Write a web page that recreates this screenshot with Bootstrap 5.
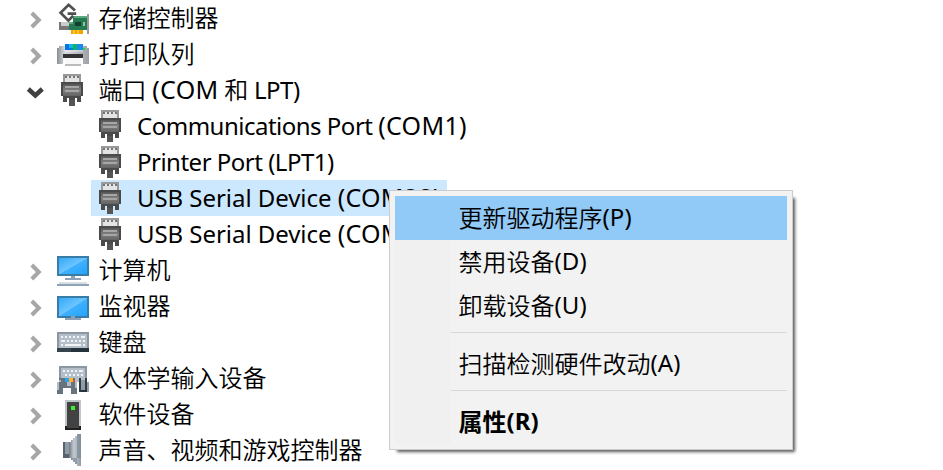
<!DOCTYPE html>
<html lang="zh-CN">
<head>
<meta charset="utf-8">
<title>设备管理器</title>
<link href="https://cdn.jsdelivr.net/npm/bootstrap@5.3.0/dist/css/bootstrap.min.css" rel="stylesheet">
<style>
body{width:943px;height:470px;background:#fff;color:#000;font:24px/36px "Noto Sans","Noto Sans CJK SC",sans-serif}
.zh{font-family:"Noto Sans CJK SC",sans-serif;font-weight:350}
.en{font-family:"Noto Sans",sans-serif;letter-spacing:-.5px}
.en-usb{letter-spacing:-.05px}
.com-word{font-size:25px;letter-spacing:.3px}
.tree-row{height:36px;padding-left:25px;line-height:34px}
.twisty{width:22px;height:36px;margin-right:10px;fill:none;stroke:#a6a6a6;stroke-width:4}
.twisty.open{stroke:#404040;stroke-width:4.5}
.dev-icon{width:32px;height:32px;margin:2px 9.5px 2px 0;shape-rendering:crispEdges}
.tree-child{padding-left:91px}
.child-label{height:36px;padding-left:4px;line-height:35px}
.child-label.selected{background:#cce8ff;width:356px}
.child-label .dev-icon{margin-right:10px}
.ctx{left:389px;top:190px;width:404px;height:260px;padding:5px;background:#f2f2f2;border:1px solid #ccc;box-shadow:5px 5px 3px -3px rgba(0,0,0,.65)}
.ctx-body{background:linear-gradient(90deg,#f0f0f0 56px,#f2f2f2 56px)}
.ctx-item{height:44px;padding:0 0 2px 63.5px}
.ctx-item .en{letter-spacing:.1px}
.ctx-item.hot{background:#91c9f7}
.ctx-line{height:1px;margin:4px 0 9px 56px;background:#d7d7d7}
</style>
<script src="https://cdn.jsdelivr.net/npm/bootstrap@5.3.0/dist/js/bootstrap.bundle.min.js"></script>
</head>
<body class="overflow-hidden position-relative">
<svg width="0" height="0" class="position-absolute">
<defs>
<linearGradient id="scr" x1="0" y1="0" x2="1" y2="1"><stop offset="0" stop-color="#35a8f8"/><stop offset=".5" stop-color="#6cc5ff"/><stop offset=".52" stop-color="#3fb0ff"/><stop offset="1" stop-color="#22a4fb"/></linearGradient>
<linearGradient id="plug" x1="0" y1="0" x2="0" y2="1"><stop offset="0" stop-color="#555"/><stop offset=".5" stop-color="#808080"/><stop offset="1" stop-color="#636363"/></linearGradient>
<linearGradient id="cone"><stop offset="0" stop-color="#707a84"/><stop offset=".4" stop-color="#c3c9cf"/><stop offset="1" stop-color="#8f9ba6"/></linearGradient>
<linearGradient id="prn"><stop offset="0" stop-color="#8a8d92"/><stop offset=".25" stop-color="#d8dade"/><stop offset="1" stop-color="#9da0a6"/></linearGradient>
</defs>
<symbol id="shut" viewBox="0 0 22 36"><path d="M6.8 13l7 7-7 7"/></symbol>
<symbol id="opened" viewBox="0 0 22 36"><path d="M3.3 17l7 6.5 7-6.5"/></symbol>
<symbol id="port" viewBox="0 0 16 16">
<path fill="#999" d="M3 0h9v4H3z"/><path fill="#e3e3e3" d="M4 1h7v3H4z"/><path fill="#777" d="M4 1h1v1H4zM6 1h1v1H6zM8 1h1v1H8zM10 1h1v1h-1z"/>
<path fill="#4a4a4a" d="M2 4h11v7H12v3h-2v-2H9v4H6v-4H5v2H3v-3H2z"/><path fill="url(#plug)" d="M3 5h9v6H3z"/><path fill="#a6a6a6" d="M4 6h7v1H4zM4 8h7v1H4z"/><path fill="#555" d="M6 13h3v3H6z"/>
</symbol>
<symbol id="storage" viewBox="0 0 16 16">
<path fill="#777" d="M1 10h5v4H1z"/><path fill="#ccc" d="M2 10h4v2H2z"/>
<path fill="#267a52" d="M8 7h7v7H6v-4h2z"/><path fill="#59a981" d="M8 7h7v1H8zM6 10h2v1H6z"/><path fill="#173d31" d="M9 10h3v2H9z"/><path fill="#8cc6a8" d="M13 10h1v2h-1z"/>
<path fill="#f5a400" d="M7 14h6v2H7z"/><path fill="#ffc52e" d="M8 14h1v2H8zM10 14h1v2h-1z"/><path fill="#999" d="M15 6h1v10h-1z"/>
<path fill="#fff" d="M5 3h2v1h1v1H5v3h1v1H5V8H4V7H3V4h2z"/>
<path shape-rendering="auto" fill="none" stroke="#505050" stroke-width="1.35" d="M9 4.3L5.8 1.4 1.8 5.4l3.9 3.9 2.4-2.4M9.6 5.8H5.3"/>
</symbol>
<symbol id="printer" viewBox="0 0 16 16">
<path fill="url(#prn)" d="M1 4h14v1h1v8h-3v-3H3v3H0V5h1z"/><path fill="#0078e0" d="M4 3h9v3H4z"/><path fill="#17b2ef" d="M6 3h2v2H6z"/><path fill="#09b85d" d="M8 3h2v3H8z"/><path fill="#1d87f5" d="M10 3h3v3h-3z"/><path fill="#fff" d="M4 6h9v1H4z" opacity=".35"/><path fill="#00ed28" d="M13 5h1v1h-1z"/>
<path fill="#333" d="M3 8h10v2H3z"/><path fill="#f8f8f8" d="M4 10h8v4H4z"/><path fill="#bbb" d="M4 13h8v1H4z"/>
</symbol>
<symbol id="pc" viewBox="0 0 16 16">
<path fill="#397ca6" d="M0 1h16v10H0z"/><path fill="url(#scr)" d="M1 2h14v8H1z"/><path fill="#8da2b6" d="M7 11h2v1H7zM4 12h8v1H4z"/><path fill="#d9dee3" d="M1 14h14v1H1z"/><path fill="#8da2b6" d="M0 15h16v1H0z"/>
</symbol>
<symbol id="screen" viewBox="0 0 16 16">
<path fill="#397ca6" d="M0 3h16v11H0z"/><path fill="url(#scr)" d="M1 4h14v9H1z"/><path fill="#8da2b6" d="M7 13h2v1H7zM4 14h8v1H4z"/>
</symbol>
<symbol id="keys" viewBox="0 0 16 16">
<path fill="#8c97a1" d="M0 3h16v8H0z"/><path fill="#b5bfc9" d="M1 4h14v7H1z"/><path fill="#f1f4f6" d="M2 5h1v1H2zM4 5h1v1H4zM6 5h1v1H6zM8 5h1v1H8zM10 5h1v1h-1zM12 5h2v1h-2zM2 7h2v1H2zM5 7h1v1H5zM7 7h1v1H7zM9 7h1v1H9zM11 7h1v1h-1zM13 7h1v1h-1zM2 9h1v1H2zM4 9h8v1H4zM13 9h1v1h-1z"/><path fill="#35434d" d="M0 11h16v2H0z"/><path fill="#26323b" d="M7 11h9v2H7z"/>
</symbol>
<symbol id="hid" viewBox="0 0 16 16">
<path fill="#8c97a1" d="M1 2h14v8H1z"/><path fill="#b5bfc9" d="M2 3h12v7H2z"/><path fill="#f1f4f6" d="M3 4h1v1H3zM5 4h1v1H5zM7 4h1v1H7zM9 4h1v1H9zM11 4h2v1h-2zM4 6h1v1H4zM6 6h1v1H6zM8 6h1v1H8zM10 6h1v1h-1zM12 6h1v1h-1z"/>
<path fill="#68747d" d="M1 8h8v2h1v6H7v-3H3v3H0v-6h1z"/><path fill="#b4bdc5" d="M1 9h1v1H1zM0 10h1v4H0zM9 10h1v3H9zM5 10h2v2H5z"/><path fill="#23a7f5" d="M4 8h2v2H4z"/><path fill="#ffb12b" d="M6 8h2v2H6z"/><path fill="#da493c" d="M8 9h1v1H8z"/><path fill="#2f3d47" d="M11 8h1v7h-1zM14 8h1v7h-1z"/><path fill="#919da6" d="M12 9h2v6h-2zM15 10h1v5h-1z"/><path fill="#26323b" d="M12 14h3v1h-3z"/>
</symbol>
<symbol id="soft" viewBox="0 0 16 16">
<path fill="#c0c5ca" d="M4 1h8v13H4z"/><path fill="#424242" d="M5 2h6v12H5z"/><path fill="#3bf32d" d="M7 4h2v2H7z"/><path fill="#202020" d="M4 14h8v2H4z"/><path fill="#444" d="M5 14h6v1H5z"/>
</symbol>
<symbol id="sound" viewBox="0 0 16 16">
<path fill="#59636d" d="M3 4h3v8H3z"/><path fill="#8f9ba6" d="M4 4h2v6H4z"/><path fill="url(#cone)" d="M6 4h1V3h1V2h1V1h1V0h2v16h-2v-1H9v-1H8v-1H7v-1H6z"/><path fill="#74818d" d="M10 0h2v16h-2zM6 12h1v1h1v1h1v1h1v1h2v-4H6z" opacity=".55"/>
</symbol>
</svg>

<main class="d-flex flex-column">
<div class="tree-row d-flex"><svg class="twisty"><use href="#shut"/></svg><svg class="dev-icon"><use href="#storage"/></svg><span class="zh">存储控制器</span></div>
<div class="tree-row d-flex"><svg class="twisty"><use href="#shut"/></svg><svg class="dev-icon"><use href="#printer"/></svg><span class="zh">打印队列</span></div>
<div class="tree-row d-flex"><svg class="twisty open"><use href="#opened"/></svg><svg class="dev-icon"><use href="#port"/></svg><span class="text-nowrap"><span class="zh">端口</span><span class="en"> <span class="com-word">(COM</span> </span><span class="zh">和</span><span class="en"> LPT)</span></span></div>
<div class="tree-child"><div class="child-label d-flex"><svg class="dev-icon"><use href="#port"/></svg><span class="en text-nowrap">Communications Port <span class="com-word">(COM1)</span></span></div></div>
<div class="tree-child"><div class="child-label d-flex"><svg class="dev-icon"><use href="#port"/></svg><span class="en text-nowrap">Printer Port (LPT1)</span></div></div>
<div class="tree-child"><div class="child-label selected d-flex"><svg class="dev-icon"><use href="#port"/></svg><span class="en en-usb text-nowrap">USB Serial Device <span class="com-word">(COM28)</span></span></div></div>
<div class="tree-child"><div class="child-label d-flex"><svg class="dev-icon"><use href="#port"/></svg><span class="en en-usb text-nowrap">USB Serial Device <span class="com-word">(COM29)</span></span></div></div>
<div class="tree-row d-flex"><svg class="twisty"><use href="#shut"/></svg><svg class="dev-icon"><use href="#pc"/></svg><span class="zh">计算机</span></div>
<div class="tree-row d-flex"><svg class="twisty"><use href="#shut"/></svg><svg class="dev-icon"><use href="#screen"/></svg><span class="zh">监视器</span></div>
<div class="tree-row d-flex"><svg class="twisty"><use href="#shut"/></svg><svg class="dev-icon"><use href="#keys"/></svg><span class="zh">键盘</span></div>
<div class="tree-row d-flex"><svg class="twisty"><use href="#shut"/></svg><svg class="dev-icon"><use href="#hid"/></svg><span class="zh">人体学输入设备</span></div>
<div class="tree-row d-flex"><svg class="twisty"><use href="#shut"/></svg><svg class="dev-icon"><use href="#soft"/></svg><span class="zh">软件设备</span></div>
<div class="tree-row d-flex"><svg class="twisty"><use href="#shut"/></svg><svg class="dev-icon"><use href="#sound"/></svg><span class="zh">声音、视频和游戏控制器</span></div>
</main>

<div class="ctx position-absolute"><div class="ctx-body h-100">
<div class="ctx-item hot d-flex align-items-center"><span class="zh">更新驱动程序</span><span class="en">(P)</span></div>
<div class="ctx-item d-flex align-items-center"><span class="zh">禁用设备</span><span class="en">(D)</span></div>
<div class="ctx-item d-flex align-items-center"><span class="zh">卸载设备</span><span class="en">(U)</span></div>
<div class="ctx-line"></div>
<div class="ctx-item d-flex align-items-center"><span class="zh">扫描检测硬件改动</span><span class="en">(A)</span></div>
<div class="ctx-line"></div>
<div class="ctx-item d-flex align-items-center"><span class="zh fw-bold">属性</span><span class="en fw-bold">(R)</span></div>
</div></div>
</body>
</html>
